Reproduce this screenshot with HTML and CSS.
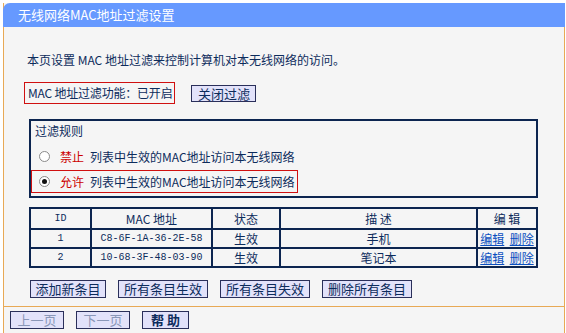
FILE: index.html
```html
<!DOCTYPE html>
<html lang="zh-CN">
<head>
  <meta charset="UTF-8" />
  <title>无线网络MAC地址过滤设置</title>
  <link rel="stylesheet" href="styles.css">
</head>
<body>
  <div class="panel">
    <div class="title">无线网络MAC地址过滤设置</div>
    <div class="content">
      <p class="intro">本页设置 MAC 地址过滤来控制计算机对本无线网络的访问。</p>
      <div class="status-row">
        <span class="status red-box">MAC 地址过滤功能：已开启</span>
        <button class="btn btn-close">关闭过滤</button>
      </div>

      <div class="rules">
        <div class="rules-title">过滤规则</div>
        <div class="rule">
          <span class="radio"></span>
          <span class="warn">禁止</span>
          <span>列表中生效的MAC地址访问本无线网络</span>
        </div>
        <div class="rule rule-on red-box">
          <span class="radio checked"></span>
          <span class="warn">允许</span>
          <span>列表中生效的MAC地址访问本无线网络</span>
        </div>
      </div>

      <table class="list">
        <thead>
          <tr>
            <th class="c-id mono">ID</th>
            <th class="c-mac">MAC 地址</th>
            <th class="c-state">状态</th>
            <th>描 述</th>
            <th class="c-edit">编 辑</th>
          </tr>
        </thead>
        <tbody>
          <tr>
            <td class="mono">1</td>
            <td class="mono">C8-6F-1A-36-2E-58</td>
            <td>生效</td>
            <td>手机</td>
            <td><a href="#">编辑</a>&nbsp; <a href="#">删除</a></td>
          </tr>
          <tr>
            <td class="mono">2</td>
            <td class="mono">10-68-3F-48-03-90</td>
            <td>生效</td>
            <td>笔记本</td>
            <td><a href="#">编辑</a>&nbsp; <a href="#">删除</a></td>
          </tr>
        </tbody>
      </table>

      <div class="actions">
        <button class="btn btn-add">添加新条目</button>
        <button class="btn btn-wide">所有条目生效</button>
        <button class="btn btn-wide">所有条目失效</button>
        <button class="btn btn-wide">删除所有条目</button>
      </div>
    </div>
    <div class="footer">
      <button class="btn btn-page" disabled>上一页</button>
      <button class="btn btn-page" disabled>下一页</button>
      <button class="btn btn-help">帮 助</button>
    </div>
  </div>
</body>
</html>
```

FILE: styles.css
```css
body {
  margin: 0;
  padding: 3px 0 0 3px;
  background-color: #fff;
  font-family: "Noto Sans CJK SC", "Liberation Sans", sans-serif;
  font-size: 12px;
  color: #0d2c5c;
}
.panel {
  width: 560px;
  background-color: #f5f5f5;
  border-left: 1px solid #e8a955;
  border-right: 1px solid #e8a955;
  border-bottom: 1px solid #e8a955;
}
.title {
  height: 24px;
  line-height: 24px;
  margin: 0 -1px;
  padding-left: 15px;
  background-color: #6699ff;
  border-top-left-radius: 7px;
  color: #fff;
  font-size: 13px;
}
.content {
  padding: 0 26px 8px 25px;
  border-bottom: 1px solid #e8a955;
}
.intro {
  margin: 0 0 0 -2px;
  padding-top: 23px;
  line-height: 20px;
}
.status-row {
  display: flex;
  align-items: center;
  gap: 16px;
  margin-top: 12px;
  margin-left: -5px;
}
.red-box {
  border: 1px solid #d01010;
}
.status {
  height: 20px;
  line-height: 20px;
  padding: 0 2px 0 3px;
  letter-spacing: -0.2px;
}
.btn {
  height: 18px;
  padding: 0;
  background-color: #e2e2fa;
  border: 1px solid #2a2f5a;
  color: #0d2c5c;
  font-family: "Noto Sans CJK SC", sans-serif;
  font-size: 13px;
  line-height: 16px;
}
.btn-close {
  width: 65px;
  height: 17px;
}
.rules {
  margin-top: 15px;
  width: 505px;
  height: 75px;
  border: 2px solid #0c2550;
}
.rules-title {
  height: 20px;
  line-height: 20px;
  padding-left: 4px;
}
.rule {
  display: flex;
  align-items: center;
  gap: 6px;
  height: 21px;
  margin-top: 5px;
  padding-left: 8px;
  white-space: nowrap;
}
.rule-on {
  width: fit-content;
  height: 21px;
  margin-top: 3px;
  padding-left: 7px;
  padding-right: 2px;
}
.warn {
  color: #cc0000;
  margin-left: 4px;
}
.radio {
  width: 11px;
  height: 11px;
  border: 1px solid #8a8a8a;
  border-radius: 50%;
  background-color: #fff;
  box-sizing: border-box;
  position: relative;
}
.radio.checked::after {
  content: "";
  position: absolute;
  left: 2px;
  top: 2px;
  width: 5px;
  height: 5px;
  border-radius: 50%;
  background-color: #111;
}
.list {
  margin-top: 9px;
  width: 509px;
  border-collapse: collapse;
  border: 2px solid #0c2550;
}
.list th, .list td {
  border: 2px solid #0c2550;
  height: 17px;
  padding: 0;
  text-align: center;
  font-weight: normal;
  line-height: 17px;
}
.list th {
  height: 19px;
}
.c-id { width: 59px; }
.c-mac { width: 119px; }
.c-state { width: 66px; }
.c-edit { width: 58px; }
.mono {
  font-family: "Liberation Mono", monospace;
  font-size: 10px;
}
.list a {
  color: #0a4fc0;
}
.actions {
  display: flex;
  gap: 12px;
  margin: 12px 0 0 1px;
}
.btn-add { width: 76px; }
.btn-wide { width: 90px; }
.footer {
  display: flex;
  gap: 12px;
  padding: 4px 0 4px 6px;
}
.btn-page {
  width: 54px;
  color: #8a97b8;
}
.btn-help {
  width: 47px;
  font-weight: bold;
}
```
